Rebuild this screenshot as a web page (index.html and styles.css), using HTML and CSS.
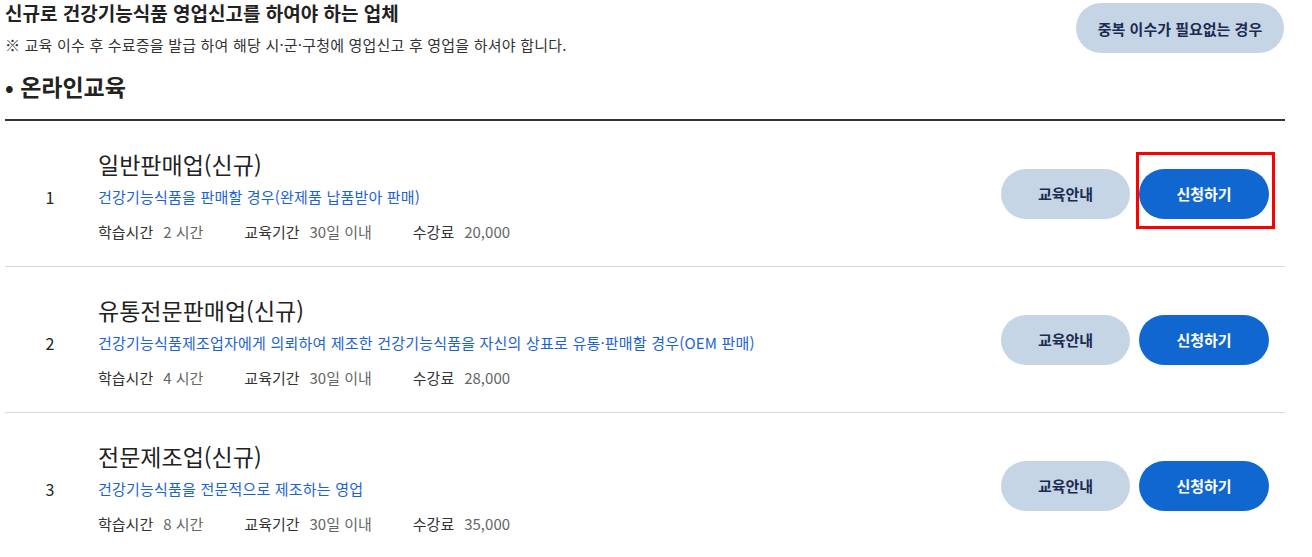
FILE: index.html
```html
<!DOCTYPE html>
<html lang="ko">
<head>
<meta charset="utf-8">
<title>온라인교육</title>
<link rel="stylesheet" href="styles.css">
</head>
<body>
<div class="page">
  <div class="head">
    <div class="head-text">
      <h2 class="head-title">신규로 건강기능식품 영업신고를 하여야 하는 업체</h2>
      <p class="head-note">※ 교육 이수 후 수료증을 발급 하여 해당 시·군·구청에 영업신고 후 영업을 하셔야 합니다.</p>
      <h3 class="section-title">• 온라인교육</h3>
    </div>
    <a class="btn btn-light btn-wide" href="#">중복 이수가 필요없는 경우</a>
  </div>

  <ul class="list">
    <li class="row">
      <div class="num">1</div>
      <div class="info">
        <div class="name">일반판매업(신규)</div>
        <div class="desc">건강기능식품을 판매할 경우(완제품 납품받아 판매)</div>
        <div class="meta">
          <span class="m-item"><span class="m-label">학습시간</span><span class="m-val">2 시간</span></span>
          <span class="m-item"><span class="m-label">교육기간</span><span class="m-val">30일 이내</span></span>
          <span class="m-item"><span class="m-label">수강료</span><span class="m-val">20,000</span></span>
        </div>
      </div>
      <div class="actions">
        <a class="btn btn-light" href="#">교육안내</a>
        <span class="apply-wrap"><a class="btn btn-blue" href="#">신청하기</a><span class="mark"></span></span>
      </div>
    </li>
    <li class="row">
      <div class="num">2</div>
      <div class="info">
        <div class="name">유통전문판매업(신규)</div>
        <div class="desc">건강기능식품제조업자에게 의뢰하여 제조한 건강기능식품을 자신의 상표로 유통·판매할 경우(OEM 판매)</div>
        <div class="meta">
          <span class="m-item"><span class="m-label">학습시간</span><span class="m-val">4 시간</span></span>
          <span class="m-item"><span class="m-label">교육기간</span><span class="m-val">30일 이내</span></span>
          <span class="m-item"><span class="m-label">수강료</span><span class="m-val">28,000</span></span>
        </div>
      </div>
      <div class="actions">
        <a class="btn btn-light" href="#">교육안내</a>
        <span class="apply-wrap"><a class="btn btn-blue" href="#">신청하기</a></span>
      </div>
    </li>
    <li class="row">
      <div class="num">3</div>
      <div class="info">
        <div class="name">전문제조업(신규)</div>
        <div class="desc">건강기능식품을 전문적으로 제조하는 영업</div>
        <div class="meta">
          <span class="m-item"><span class="m-label">학습시간</span><span class="m-val">8 시간</span></span>
          <span class="m-item"><span class="m-label">교육기간</span><span class="m-val">30일 이내</span></span>
          <span class="m-item"><span class="m-label">수강료</span><span class="m-val">35,000</span></span>
        </div>
      </div>
      <div class="actions">
        <a class="btn btn-light" href="#">교육안내</a>
        <span class="apply-wrap"><a class="btn btn-blue" href="#">신청하기</a></span>
      </div>
    </li>
  </ul>
</div>
</body>
</html>
```

FILE: styles.css
```css
* { box-sizing: border-box; }
html, body { margin: 0; padding: 0; background: #fff; }
body {
  font-family: "Noto Sans CJK KR", "Noto Sans", sans-serif;
  color: #222;
  overflow: hidden;
}
.page {
  width: 1280px;
  margin-left: 5px;
}
.head {
  display: flex;
  justify-content: space-between;
  align-items: flex-start;
}
.head-title {
  margin: 0;
  font-size: 19px;
  line-height: 26px;
  font-weight: 700;
  color: #222;
}
.head-note {
  margin: 8px 0 0;
  font-size: 15px;
  line-height: 22px;
  color: #333;
  letter-spacing: 0.2px;
}
.section-title {
  margin: 14px 0 0;
  font-size: 23px;
  line-height: 32px;
  font-weight: 700;
  color: #222;
}
.btn {
  display: inline-flex;
  align-items: center;
  justify-content: center;
  height: 50px;
  border-radius: 25px;
  font-size: 15px;
  font-weight: 700;
  text-decoration: none;
  white-space: nowrap;
}
.btn-light {
  width: 129px;
  background: #c6d5e6;
  color: #1b2c50;
}
.btn-wide {
  width: 208px;
  margin-top: 3px;
  margin-right: 1px;
}
.btn-blue {
  width: 130px;
  background: #1167d0;
  color: #fff;
}
.list {
  list-style: none;
  margin: 17px 0 0;
  padding: 0;
  border-top: 2px solid #333;
}
.row {
  display: flex;
  align-items: center;
  padding: 28px 16px 23px 0;
  border-bottom: 1px solid #d6d6d6;
}
.num {
  width: 90px;
  flex: none;
  text-align: center;
  font-size: 16px;
  color: #222;
  padding-top: 2px;
}
.info {
  flex: 1;
  margin-left: 3px;
}
.name {
  font-size: 23px;
  line-height: 30px;
  color: #222;
}
.desc {
  margin-top: 7px;
  font-size: 15px;
  line-height: 22px;
  color: #1c63d2;
  letter-spacing: 0.2px;
}
.meta {
  margin-top: 13px;
  display: flex;
  gap: 41px;
  font-size: 15px;
  line-height: 22px;
}
.m-item {
  display: inline-flex;
}
.m-label {
  color: #333;
  margin-right: 10px;
}
.m-val {
  color: #666;
}
.actions {
  display: flex;
  gap: 9px;
  align-items: center;
  margin-top: -5px;
}
.apply-wrap {
  position: relative;
  display: inline-flex;
}
.mark {
  position: absolute;
  top: -17px;
  left: -3px;
  width: 139px;
  height: 77px;
  border: 3px solid #ff0000;
  pointer-events: none;
}
```
